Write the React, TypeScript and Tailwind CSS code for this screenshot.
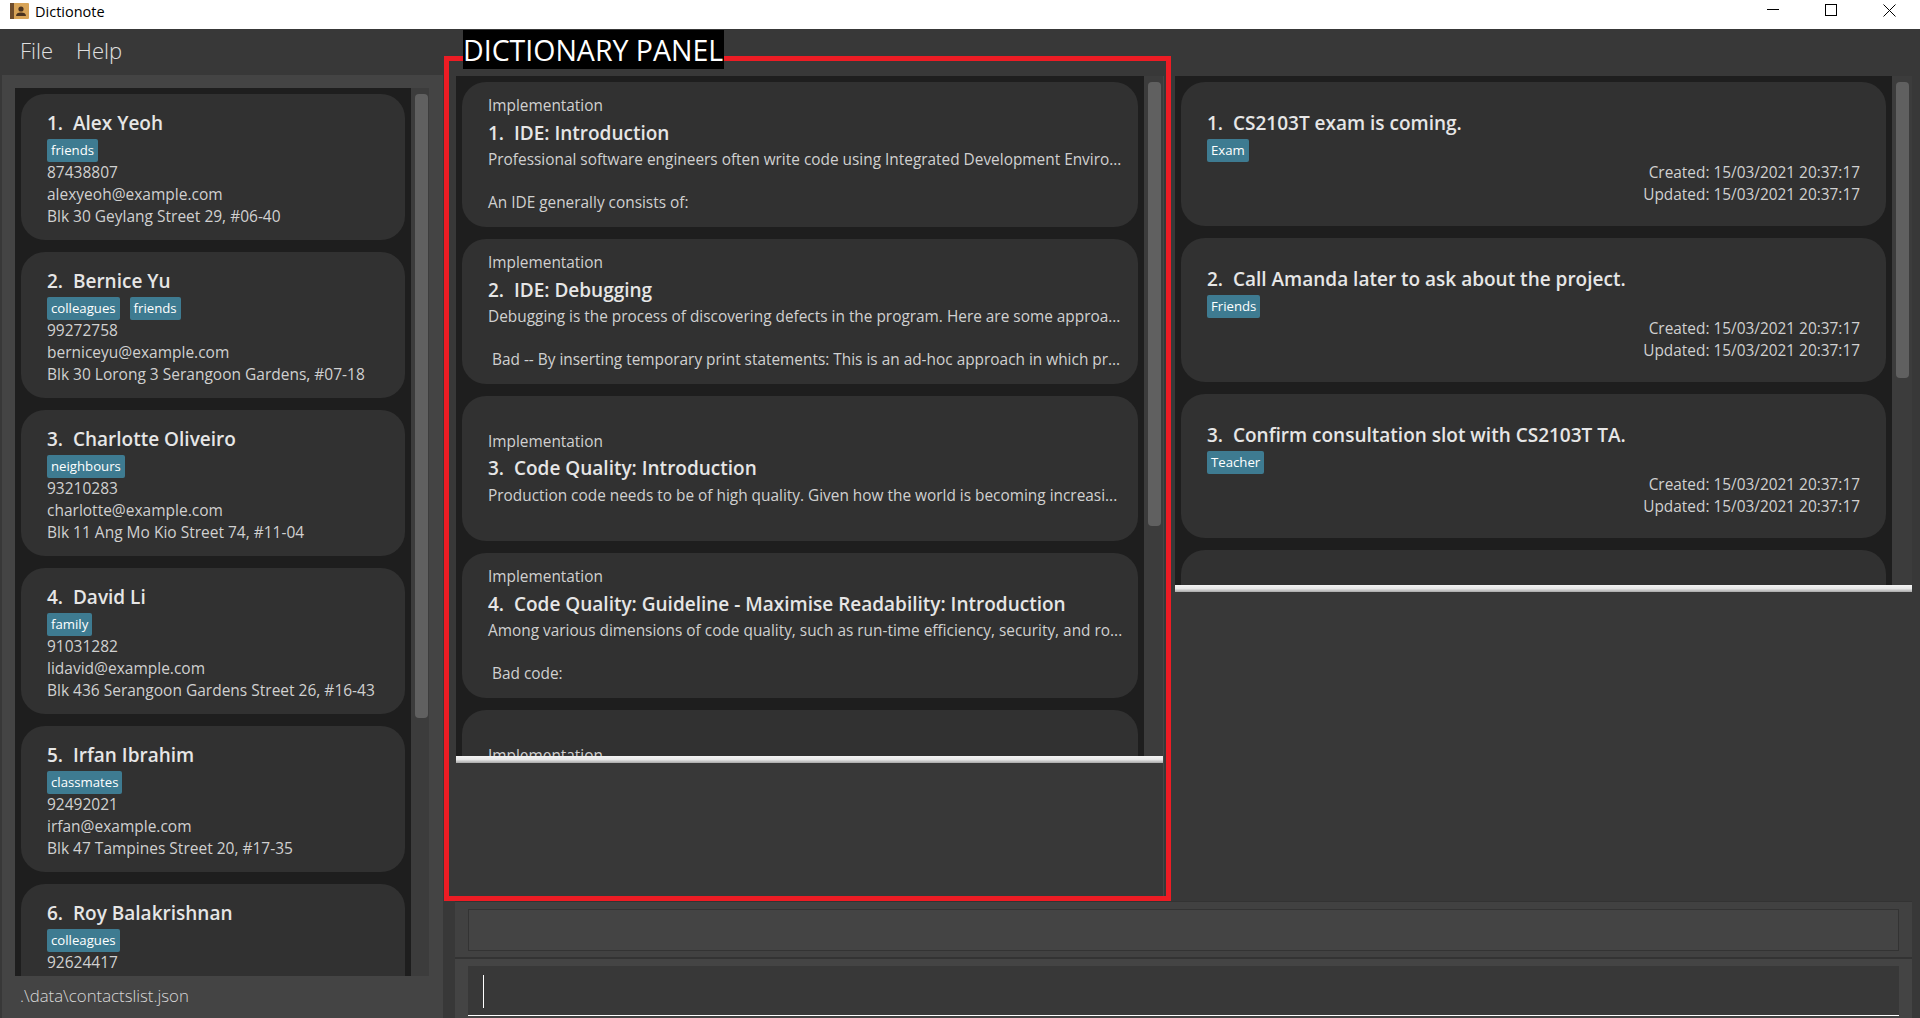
import React from 'react';

const contacts = [
  { name: 'Alex Yeoh', tags: ['friends'], lines: ['87438807', 'alexyeoh@example.com', 'Blk 30 Geylang Street 29, #06-40'] },
  { name: 'Bernice Yu', tags: ['colleagues', 'friends'], lines: ['99272758', 'berniceyu@example.com', 'Blk 30 Lorong 3 Serangoon Gardens, #07-18'] },
  { name: 'Charlotte Oliveiro', tags: ['neighbours'], lines: ['93210283', 'charlotte@example.com', 'Blk 11 Ang Mo Kio Street 74, #11-04'] },
  { name: 'David Li', tags: ['family'], lines: ['91031282', 'lidavid@example.com', 'Blk 436 Serangoon Gardens Street 26, #16-43'] },
  { name: 'Irfan Ibrahim', tags: ['classmates'], lines: ['92492021', 'irfan@example.com', 'Blk 47 Tampines Street 20, #17-35'] },
  { name: 'Roy Balakrishnan', tags: ['colleagues'], lines: ['92624417'] },
];

const entries = [
  { title: 'IDE: Introduction', lines: ['Professional software engineers often write code using Integrated Development Enviro...', '', 'An IDE generally consists of:'] },
  { title: 'IDE: Debugging', lines: ['Debugging is the process of discovering defects in the program. Here are some approa...', '', ' Bad -- By inserting temporary print statements: This is an ad-hoc approach in which pr...'] },
  { title: 'Code Quality: Introduction', lines: ['Production code needs to be of high quality. Given how the world is becoming increasi...'] },
  { title: 'Code Quality: Guideline - Maximise Readability: Introduction', lines: ['Among various dimensions of code quality, such as run-time efficiency, security, and ro...', '', ' Bad code:'] },
];

const notes = [
  { title: 'CS2103T exam is coming.', tag: 'Exam' },
  { title: 'Call Amanda later to ask about the project.', tag: 'Friends' },
  { title: 'Confirm consultation slot with CS2103T TA.', tag: 'Teacher' },
];

const Tag: React.FC<{ label: string }> = ({ label }) => (
  <span className="h-[23px] px-[4px] rounded-[2px] bg-[#3e7b91] text-white text-[13.2px] leading-[22px]">{label}</span>
);

const Title: React.FC<{ index: number; text: string }> = ({ index, text }) => (
  <div className="text-[19px] leading-[27px] font-semibold text-[#e6e6e6] whitespace-pre">{`${index}.  ${text}`}</div>
);

const Scrollbar: React.FC<{ thumb: string }> = ({ thumb }) => (
  <div className="w-[18px] shrink-0 pl-[4px] pt-[6px] bg-[#3c3c3c]">
    <div className={`${thumb} w-[13px] rounded-[4px] bg-[#606060]`} />
  </div>
);

const Splitter = () => (
  <div className="h-[7px] bg-gradient-to-b from-[#f4f4f4] via-[#e8e8e8] to-[#a8a8a8]" />
);

export default function App() {
  return (
    <div className="h-[1018px] flex flex-col overflow-hidden relative bg-[#383838] font-['Open_Sans',sans-serif] text-[#d0d0d0]">
      {/* Window title bar */}
      <div className="h-[29px] shrink-0 bg-white flex items-center pl-[10px] text-black">
        <svg width="19" height="16" viewBox="0 0 19 16" className="mb-[8px]">
          <rect x="0" y="0" width="19" height="16" rx="1" fill="#d8a458" />
          <rect x="0" y="0" width="4" height="16" fill="#6e4c2c" />
          <circle cx="11" cy="6" r="2.6" fill="#4a3320" />
          <path d="M6 13c0-2.5 2-3.5 5-3.5s5 1 5 3.5z" fill="#4a3320" />
        </svg>
        <span className="ml-[6px] text-[14.5px] mb-[6px]">Dictionote</span>
        <div className="ml-auto flex items-center gap-[46px] pr-[24px] mb-[9px]">
          <svg width="12" height="12" viewBox="0 0 12 12" stroke="#000" fill="none"><path d="M0 5.5h12" /></svg>
          <svg width="12" height="12" viewBox="0 0 12 12" stroke="#000" fill="none"><rect x="0.5" y="0.5" width="11" height="11" /></svg>
          <svg width="13" height="13" viewBox="0 0 13 13" stroke="#000" fill="none"><path d="M0.5 0.5l12 12M12.5 0.5l-12 12" /></svg>
        </div>
      </div>

      {/* Menu */}
      <div className="h-[46px] shrink-0 pb-[3px] flex items-center gap-[23px] pl-[20px] text-[22px] font-light text-[#e0e0e0]">
        <span>File</span>
        <span>Help</span>
      </div>

      <div className="flex-1 min-h-0 flex">
        {/* Contacts */}
        <div className="w-[444px] shrink-0 flex flex-col">
          <div className="flex-1 min-h-0 ml-[2px] mr-[1px] px-[13px] pt-[13px] flex bg-[#444444]">
            <div className="w-[396px] h-[888px] p-[6px] flex flex-col gap-[12px] overflow-hidden bg-[#1e1e1e]">
              {contacts.map((c, i) => (
                <div key={c.name} className="h-[146px] shrink-0 pl-[26px] pt-[16px] rounded-[24px] bg-[#313131] text-[15.5px] leading-[22px]">
                  <Title index={i + 1} text={c.name} />
                  <div className="flex gap-[10px] mt-[2px] mb-[-1px]">
                    {c.tags.map(t => <Tag key={t} label={t} />)}
                  </div>
                  {c.lines.map(l => <div key={l}>{l}</div>)}
                </div>
              ))}
            </div>
            <Scrollbar thumb="h-[624px]" />
          </div>
          <div className="h-[42px] shrink-0 ml-[2px] mr-[1px] pl-[18px] pb-[3px] flex items-center bg-[#444444] text-[16.8px] font-light text-[#d8d8d8]">
            .\data\contactslist.json
          </div>
        </div>

        <div className="flex-1 min-w-0 flex flex-col">
          <div className="h-[826px] shrink-0 pt-px flex items-start">
            {/* Dictionary panel */}
            <div className="w-[720px] h-full shrink-0 pl-[12px] border-r border-[#474747]">
              <div className="h-[680px] flex bg-[#3c3c3c]">
                <div className="w-[688px] p-[6px] flex flex-col gap-[12px] overflow-hidden bg-[#1e1e1e]">
                  {entries.map((e, i) => (
                    <div key={e.title} className="h-[145px] shrink-0 px-[26px] flex flex-col justify-center rounded-[24px] bg-[#313131] text-[15.4px] leading-[21.5px]">
                      <div className="mb-[3px]">Implementation</div>
                      <Title index={i + 1} text={e.title} />
                      <div className="h-[2.5px]" />
                      {e.lines.map((l, j) => (
                        <div key={j} className="h-[21.5px] whitespace-pre">{l}</div>
                      ))}
                    </div>
                  ))}
                  <div className="h-[145px] shrink-0 px-[26px] pt-[35px] rounded-[24px] bg-[#313131] text-[15.4px] leading-[21.5px]">
                    Implementation
                  </div>
                </div>
                <Scrollbar thumb="h-[444px]" />
              </div>
              <Splitter />
            </div>

            {/* Notes panel */}
            <div className="w-[737px] shrink-0 ml-[11px]">
              <div className="h-[509px] flex bg-[#3c3c3c]">
                <div className="w-[717px] p-[6px] flex flex-col gap-[12px] overflow-hidden bg-[#1e1e1e]">
                  {notes.map((n, i) => (
                    <div key={n.title} className="h-[144px] shrink-0 px-[26px] pt-[28px] rounded-[24px] bg-[#313131] text-[15.4px] leading-[22px]">
                      <Title index={i + 1} text={n.title} />
                      <div className="flex mt-[2px]"><Tag label={n.tag} /></div>
                      <div className="text-right">Created: 15/03/2021 20:37:17</div>
                      <div className="text-right">Updated: 15/03/2021 20:37:17</div>
                    </div>
                  ))}
                  <div className="h-[144px] shrink-0 rounded-[24px] bg-[#313131]" />
                </div>
                <Scrollbar thumb="h-[296px]" />
              </div>
              <Splitter />
            </div>
          </div>

          {/* Result box */}
          <div className="h-[56px] shrink-0 ml-[11px] mr-[8px] px-[13px] pt-[7px] border-t border-[#333333] bg-[#414141]">
            <div className="h-[42px] border border-[#333333] bg-[#444444]" />
          </div>

          {/* Command box */}
          <div className="flex-1 min-h-0 ml-[11px] mr-[8px] px-[13px] pt-[7px] border-t-2 border-[#333333] bg-[#444444]">
            <div className="h-[50px] pl-[15px] pt-[9px] border-b border-white bg-[#383838]">
              <div className="w-px h-[33px] bg-white" />
            </div>
          </div>
        </div>
      </div>

      {/* Annotation drawn over the screenshot */}
      <div className="absolute left-[444px] top-[56px] w-[727px] h-[845px] border-[5px] border-[#ed1c24] pointer-events-none" />
      <div className="absolute left-[463px] top-[30px] h-[39px] w-[261px] bg-black text-white text-[28.5px] leading-[40px] whitespace-nowrap overflow-hidden">
        DICTIONARY PANEL
      </div>
    </div>
  );
}
